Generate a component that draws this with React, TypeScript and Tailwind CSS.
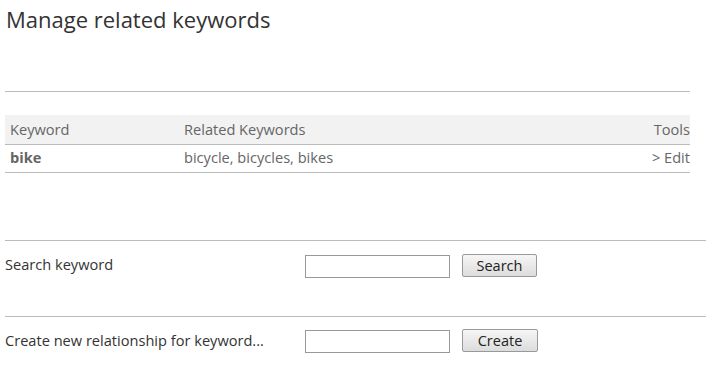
export default function App() {
  return (
    <div className="min-h-screen bg-white px-[5px] pt-[4px] text-[#333] [font-family:'Open_Sans',sans-serif]">
      {/* Page title */}
      <h1 className="pl-[1px] pt-px text-[22px] leading-[28px] font-normal text-[#333]">Manage related keywords</h1>

      <div className="mt-[58px] h-px w-[685px] bg-[#bbb]" />

      {/* Related keywords table */}
      <table className="mt-[23px] w-[685px] border-collapse text-[14.6px]">
        <thead>
          <tr className="h-[29px] bg-[#f2f2f2] text-[#666]">
            <th className="w-[179px] pl-[5px] pt-[2px] text-left font-normal">Keyword</th>
            <th className="pt-[2px] text-left font-normal">Related Keywords</th>
            <th className="pt-[2px] text-right font-normal">Tools</th>
          </tr>
        </thead>
        <tbody>
          <tr className="h-[28px] border-y border-[#bbb] text-[#666]">
            <td className="pl-[5px] font-bold">bike</td>
            <td>bicycle, bicycles, bikes</td>
            <td className="text-right">&gt; Edit</td>
          </tr>
        </tbody>
      </table>

      {/* Search */}
      <div className="mt-[67px] h-px w-[701px] bg-[#bbb]" />
      <div className="flex h-[75px] items-start pt-[13px] text-[14.6px] text-[#333]">
        <div className="w-[300px] leading-[21px]">Search keyword</div>
        <input className="mt-[1px] h-[23px] w-[145px] border border-[#999] bg-white" />
        <button className="ml-[12px] h-[23px] w-[75px] rounded-[2px] border border-[#999] bg-gradient-to-b from-[#f6f6f6] to-[#dcdcdc] pt-px text-[14.5px] leading-[20px] text-[#222]">
          Search
        </button>
      </div>

      {/* Create */}
      <div className="h-px w-[701px] bg-[#bbb]" />
      <div className="flex items-start pt-[12px] text-[14.6px] text-[#333]">
        <div className="w-[300px] pt-px leading-[21px]">Create new relationship for keyword...</div>
        <input className="mt-[1px] h-[23px] w-[145px] border border-[#999] bg-white" />
        <button className="ml-[12px] h-[23px] w-[76px] rounded-[2px] border border-[#999] bg-gradient-to-b from-[#f6f6f6] to-[#dcdcdc] pt-px text-[14.5px] leading-[20px] text-[#222]">
          Create
        </button>
      </div>
    </div>
  )
}
